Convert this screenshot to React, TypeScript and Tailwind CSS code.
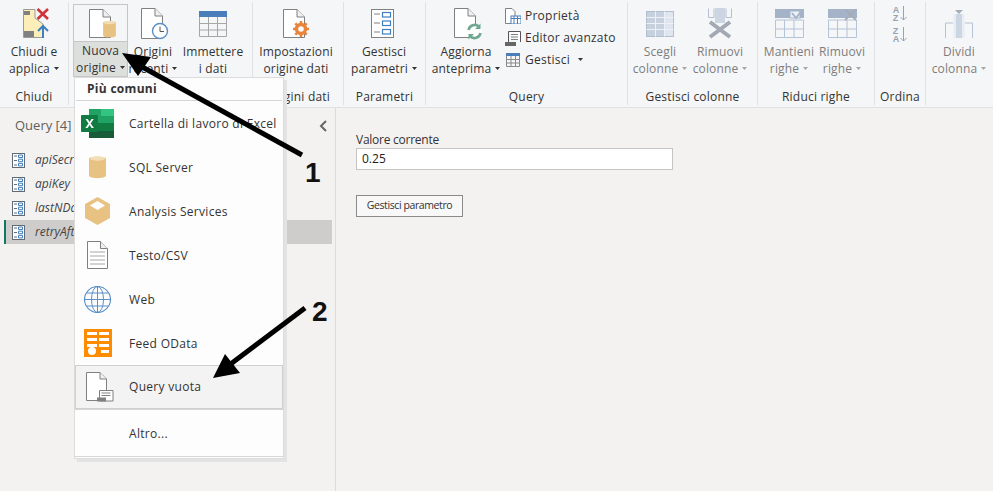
import React from 'react';

const font = "font-['Open_Sans','Noto_Sans',sans-serif]";

function Caret({ muted }: { muted?: boolean }) {
  return (
    <svg width="5" height="3" viewBox="0 0 5 3" className="inline-block ml-[4px] mb-[2px]">
      <path d="M0 0h5L2.5 3z" fill={muted ? '#a6a6a6' : '#333'} />
    </svg>
  );
}

function Doc({ w = 22, h = 29, stroke = '#808080' }: { w?: number; h?: number; stroke?: string }) {
  return (
    <svg width={w} height={h} viewBox="0 0 22 29" className="block">
      <path d="M0.5 0.5H14L21.5 8V28.5H0.5Z" fill="#fff" stroke={stroke} />
      <path d="M14 0.5V8H21.5" fill="#f0f0f0" stroke={stroke} />
    </svg>
  );
}

function ChiudiIcon() {
  return (
    <svg width="26" height="31" viewBox="0 0 26 31" className="ml-[4px]">
      <path d="M0.5 1.5H12V10L20 16V29.5H0.5Z" fill="#fbeeb8" stroke="#9a9a9a" />
      <rect x="1" y="3" width="6" height="4" fill="#808080" />
      <rect x="1" y="23" width="10" height="6" fill="#808080" />
      <path d="M14.5 1L25 11M25 1L14.5 11" stroke="#d13438" strokeWidth="2.6" />
      <path d="M20 30V18M15 23l5-5 5 5" stroke="#3f7fbf" strokeWidth="2" fill="none" />
    </svg>
  );
}

function Cylinder({ w = 17, h = 24 }: { w?: number; h?: number }) {
  return (
    <svg width={w} height={h} viewBox="0 0 17 24" className="block">
      <path d="M0 3.5C0 1 17 1 17 3.5V20.5C17 24 0 24 0 20.5Z" fill="#e8c283" />
      <ellipse cx="8.5" cy="3.5" rx="7.5" ry="2.2" fill="#f3dfb7" />
    </svg>
  );
}

function NuovaIcon() {
  return (
    <div className="relative w-[27px] h-[29px] ml-[3px]">
      <Doc />
      <div className="absolute left-[14px] top-[11px]">
        <Cylinder w={13} h={18} />
      </div>
    </div>
  );
}

function RecentiIcon() {
  return (
    <svg width="28" height="32" viewBox="0 0 28 32" className="ml-[4px]">
      <path d="M0.5 0.5H14L21.5 8V30.5H0.5Z" fill="#fff" stroke="#808080" />
      <path d="M14 0.5V8H21.5" fill="#f0f0f0" stroke="#808080" />
      <circle cx="19" cy="23" r="7.5" fill="#fff" stroke="#5b8fc7" strokeWidth="1.4" />
      <path d="M19 18.5V23.5H23" fill="none" stroke="#555" />
    </svg>
  );
}

function TableIcon() {
  return (
    <svg width="28" height="26" viewBox="0 0 28 26">
      <rect x="0" y="0" width="28" height="6" fill="#4a7ebb" />
      <path d="M0.5 6V25.5H27.5V6M0.5 12.5H27.5M0.5 19H27.5M9.5 6V25.5M18.5 6V25.5" fill="none" stroke="#a6a6a6" />
    </svg>
  );
}

function GearDocIcon() {
  return (
    <div className="relative w-[27px] h-[29px]">
      <Doc />
      <svg width="16" height="16" viewBox="0 0 16 16" className="absolute left-[10px] top-[12px]">
        <circle cx="8" cy="8" r="4.5" fill="none" stroke="#e8853a" strokeWidth="3.4" />
        <path d="M8 0v3M8 13v3M0 8h3M13 8h3M2.3 2.3l2 2M11.7 11.7l2 2M13.7 2.3l-2 2M4.3 11.7l-2 2" stroke="#e8853a" strokeWidth="2.6" />
      </svg>
    </div>
  );
}

function ParamIcon() {
  return (
    <svg width="23" height="29" viewBox="0 0 23 29" className="mr-[4px]">
      <rect x="0.5" y="0.5" width="22" height="28" fill="#fff" stroke="#808080" />
      <path d="M3 5h6M3 14h6M3 23h6" stroke="#808080" />
      <rect x="11.5" y="3.5" width="8" height="4.5" fill="#fff" stroke="#3f7fbf" strokeWidth="1.2" />
      <rect x="11.5" y="12" width="8" height="4.5" fill="#fff" stroke="#3f7fbf" strokeWidth="1.2" />
      <rect x="11.5" y="20.5" width="8" height="4.5" fill="#fff" stroke="#3f7fbf" strokeWidth="1.2" />
    </svg>
  );
}

function RefreshDocIcon() {
  return (
    <svg width="29" height="32" viewBox="0 0 29 32" className="ml-[4px]">
      <path d="M0.5 0.5H14L21.5 8V29.5H0.5Z" fill="#fff" stroke="#808080" />
      <path d="M14 0.5V8H21.5" fill="#f0f0f0" stroke="#808080" />
      <circle cx="20.5" cy="23.5" r="7.5" fill="#fff" />
      <path d="M14.5 22a6.2 6.2 0 0 1 10.5-3.2M26.5 25a6.2 6.2 0 0 1-10.5 3.2" fill="none" stroke="#6fa891" strokeWidth="2.6" />
      <path d="M26.5 15.5V21H21ZM14.5 31.5V26H20Z" fill="#6fa891" />
    </svg>
  );
}

function ChooseColsIcon() {
  return (
    <svg width="28" height="26" viewBox="0 0 28 26">
      <rect x="0.5" y="0.5" width="27" height="25" fill="#dfe6ef" stroke="#b4bfce" />
      <rect x="1" y="1" width="18" height="24" fill="#c6d0de" />
      <path d="M0.5 6.5H27.5M0.5 12.5H27.5M0.5 18.5H27.5M9.5 0.5V25.5M18.5 0.5V25.5" stroke="#eef2f6" />
    </svg>
  );
}

function RemoveColsIcon() {
  return (
    <svg width="24" height="31" viewBox="0 0 24 31">
      <path d="M0.5 0.5V9.5H6V0.5M18 0.5V9.5H23.5V0.5" fill="none" stroke="#b4bfce" />
      <rect x="7" y="0" width="10" height="15" fill="#ccd6e3" />
      <path d="M2 14L22 29M22 14L2 29" stroke="#a2a9b3" strokeWidth="4" />
    </svg>
  );
}

function RowsIcon({ kind }: { kind: 'keep' | 'remove' }) {
  return (
    <svg width="29" height="29" viewBox="0 0 29 29">
      <rect x="0" y="0" width="29" height="9" fill="#a5b3c9" />
      <path d="M0.5 11V28.5H28.5V11H0.5M0.5 20H28.5M9.5 11V28.5M19 11V28.5" fill="none" stroke="#b4c3d6" />
      {kind === 'keep' ? (
        <>
          <rect x="15" y="2" width="10" height="7" fill="#eef2f6" stroke="#a5b3c9" />
          <path d="M17 4l4 5 7-9" fill="none" stroke="#a5b3c9" strokeWidth="2" />
        </>
      ) : (
        <path d="M17 0L28 11M28 0L17 11" stroke="#a5adb8" strokeWidth="2" />
      )}
    </svg>
  );
}

function SortIcon({ flip }: { flip?: boolean }) {
  return (
    <div className="flex items-center gap-[1px]">
      <div className="flex flex-col text-[9px] leading-[8px] font-bold text-[#98a2ae] font-['Liberation_Sans',sans-serif]">
        <span className="block h-[8px]">{flip ? 'Z' : 'A'}</span>
        <span className="block h-[8px]">{flip ? 'A' : 'Z'}</span>
      </div>
      <svg width="7" height="16" viewBox="0 0 7 16">
        <path d="M3.5 0V14M0.5 11l3 3 3-3" fill="none" stroke="#98a2ae" />
      </svg>
    </div>
  );
}

function SplitIcon() {
  return (
    <svg width="28" height="28" viewBox="0 0 28 28">
      <path d="M0.5 28V13H8M20 13H27.5V28" fill="none" stroke="#b4c3d6" />
      <rect x="8.5" y="4" width="11" height="24" fill="#e7edf4" />
      <rect x="11" y="4" width="6" height="24" fill="#ccd6e3" />
      <path d="M10 0h8l-4 4z" fill="#a5adb8" />
    </svg>
  );
}

type BigButtonProps = {
  icon: React.ReactNode;
  lines: string[];
  caret?: boolean;
  muted?: boolean;
  width: string;
  active?: boolean;
};

function BigButton({ icon, lines, caret, muted, width, active }: BigButtonProps) {
  const color = muted ? 'text-[#7d7d7d]' : 'text-[#333]';
  return (
    <div className={`${width} flex flex-col items-center shrink-0 h-[73px] ${active ? 'border border-[#c6c6c6]' : ''}`}>
      <div className={`w-full flex items-center justify-center ${active ? 'h-[36px]' : 'h-[39px]'}`}>{icon}</div>
      <div className={`w-full flex-1 text-center text-[12px] leading-[17px] tracking-[0.15px] whitespace-nowrap ${color} ${active ? 'bg-[#dcdfdc] border-t border-[#c6c6c6]' : ''}`}>
        {lines.map((l, i) => (
          <div key={l}>
            {l}
            {caret && i === lines.length - 1 && <Caret muted={muted} />}
          </div>
        ))}
      </div>
    </div>
  );
}

function Group({ width, label, children, className = '' }: { width: string; label?: string; children: React.ReactNode; className?: string }) {
  return (
    <div className={`${width} shrink-0 h-[103px] border-r border-[#dfe1e3] flex flex-col`}>
      <div className={`h-[87px] pt-[2px] flex ${className}`}>{children}</div>
      <div className="text-center text-[12px] leading-[16px] tracking-[0.2px] text-[#333] whitespace-nowrap">{label}</div>
    </div>
  );
}

function SmallAction({ icon, label, caret }: { icon: React.ReactNode; label: string; caret?: boolean }) {
  return (
    <div className="flex items-center h-[22px] gap-[4px] text-[12px] tracking-[0.25px] text-[#333] whitespace-nowrap">
      <div className="w-[16px] flex justify-center">{icon}</div>
      <span>{label}</span>
      {caret && <Caret />}
    </div>
  );
}

function QueryIcon() {
  return (
    <svg width="13" height="15" viewBox="0 0 13 15" className="shrink-0">
      <rect x="0.5" y="0.5" width="12" height="14" fill="#fff" stroke="#5f6b76" />
      <path d="M2 3h3M2 7.5h3M2 12h3" stroke="#5f6b76" />
      <path d="M6.5 2h4v2.5h-4zM6.5 6.2h4v2.5h-4zM6.5 10.4h4v2.5h-4z" fill="none" stroke="#3f7fbf" />
    </svg>
  );
}

const queries = ['apiSecret', 'apiKey', 'lastNDays', 'retryAfter'];

function ExcelIcon() {
  return (
    <svg width="33" height="29" viewBox="0 0 33 29">
      <rect x="8" y="0" width="25" height="29" rx="1" fill="#21a366" />
      <rect x="20" y="0" width="13" height="7" fill="#33c481" />
      <rect x="8" y="0" width="12" height="7" fill="#21a366" />
      <rect x="20" y="7" width="13" height="7" fill="#21a366" />
      <rect x="8" y="14" width="25" height="8" fill="#107c41" />
      <rect x="8" y="22" width="25" height="7" fill="#185c37" />
      <rect x="0" y="6" width="17" height="17" rx="1" fill="#107c41" />
      <path d="M4.5 10l3 4.5-3.2 4.5h2.3l2-3 2 3h2.3l-3.2-4.5 3-4.5h-2.2l-1.9 2.9-1.8-2.9z" fill="#fff" />
    </svg>
  );
}

function CubeIcon() {
  return (
    <svg width="25" height="28" viewBox="0 0 25 28">
      <path d="M12.5 0L25 7V21L12.5 28L0 21V7Z" fill="#e8c283" />
      <path d="M12.5 4L20 8.5L12.5 13L5 8.5Z" fill="#fff" />
    </svg>
  );
}

function TextDocIcon() {
  return (
    <svg width="21" height="28" viewBox="0 0 21 28">
      <path d="M0.5 0.5H13.5L20.5 7.5V27.5H0.5Z" fill="#fff" stroke="#808080" />
      <path d="M13.5 0.5V7.5H20.5" fill="#f0f0f0" stroke="#808080" />
      <path d="M3 11h15M3 15h15M3 19h15M3 23h15" stroke="#a6a6a6" />
    </svg>
  );
}

function GlobeIcon() {
  return (
    <svg width="27" height="27" viewBox="0 0 27 27" fill="none" stroke="#5b8fc7">
      <circle cx="13.5" cy="13.5" r="13" strokeWidth="1.2" />
      <ellipse cx="13.5" cy="13.5" rx="6" ry="13" />
      <path d="M13.5 0.5V26.5M0.5 13.5H26.5M2.5 7H24.5M2.5 20H24.5" />
    </svg>
  );
}

function ODataIcon() {
  return (
    <svg width="28" height="28" viewBox="0 0 28 28">
      <rect width="28" height="28" fill="#ff8c00" />
      <path d="M3 3h10v3H3zM15 3h10v3H15zM3 9h10v3H3zM15 9h10v3H15zM3 15h10v3H3zM15 15h10v3H15zM17 21h8v3H17z" fill="#fff" />
      <circle cx="8" cy="22" r="4" fill="#fff" />
    </svg>
  );
}

function BlankQueryIcon() {
  return (
    <svg width="28" height="30" viewBox="0 0 28 30">
      <path d="M0.5 0.5H14L20.5 7V28.5H0.5Z" fill="#fff" stroke="#808080" />
      <path d="M14 0.5V7H20.5" fill="#f0f0f0" stroke="#808080" />
      <path d="M13.5 18.5H27V29H13.5Z" fill="#fff" stroke="#808080" />
      <path d="M15.5 21h9M15.5 23.5h9" stroke="#808080" />
      <rect x="11" y="25.5" width="9" height="4" fill="#808080" />
    </svg>
  );
}

const menuItems: { label: string; icon: React.ReactNode; hover?: boolean }[] = [
  { label: 'Cartella di lavoro di Excel', icon: <ExcelIcon /> },
  { label: 'SQL Server', icon: <Cylinder /> },
  { label: 'Analysis Services', icon: <CubeIcon /> },
  { label: 'Testo/CSV', icon: <TextDocIcon /> },
  { label: 'Web', icon: <GlobeIcon /> },
  { label: 'Feed OData', icon: <ODataIcon /> },
  { label: 'Query vuota', icon: <BlankQueryIcon />, hover: true },
];

function SourceMenu() {
  return (
    <div className="absolute left-[74px] top-[77px] w-[210px] h-[382px] bg-[#fdfdfd] border border-[#dcdcdc] shadow-[3px_3px_0_#e3e3e3] flex flex-col text-[12px] tracking-[0.3px] text-[#333]">
      <div className="h-[23px] mx-[1px] border-b border-[#d6d6d6] pl-[11px] font-bold leading-[22px]">Più comuni</div>
      {menuItems.map((item) => (
        <div
          key={item.label}
          className={`h-[44px] flex items-center ${item.hover ? 'bg-[#f3f3f3] border border-[#cfcfcf] shadow-[0_1px_0_#d6d6d6]' : ''}`}
        >
          <div className={`shrink-0 flex justify-center ${item.hover ? 'w-[47px] mr-[6px]' : 'w-[45px] mr-[9px]'}`}>{item.icon}</div>
          <span className={`whitespace-nowrap ${item.hover ? '' : 'pt-[2px]'}`}>{item.label}</span>
        </div>
      ))}
      <div className="flex-1 pl-[54px] pt-[2px] flex items-center">Altro...</div>
      <div className="h-[2px] border-t border-[#d6d6d6]" />
    </div>
  );
}

function Arrows() {
  return (
    <>
      <svg width="993" height="491" viewBox="0 0 993 491" className="absolute inset-0 pointer-events-none">
        <path d="M302 155L135 63" stroke="#000" strokeWidth="5" />
        <path d="M122 53L151 57L138 76Z" fill="#000" />
        <path d="M305 308L228 366" stroke="#000" strokeWidth="5" />
        <path d="M213 378L225 354L240 373Z" fill="#000" />
      </svg>
      <div className="absolute left-[305px] top-[157px] text-[28px] leading-[32px] font-bold text-[#111] font-['Liberation_Sans',sans-serif]">1</div>
      <div className="absolute left-[312px] top-[296px] text-[28px] leading-[32px] font-bold text-[#111] font-['Liberation_Sans',sans-serif]">2</div>
    </>
  );
}

export default function App() {
  return (
    <div className={`relative w-[993px] h-[491px] overflow-hidden bg-[#f3f2f1] flex flex-col ${font}`}>
      {/* Ribbon */}
      <div className="h-[108px] shrink-0 bg-[#f5f6f7] border-b border-[#e1e1e1] pt-[2px] flex">
        <Group width="w-[69px]" label="Chiudi">
          <BigButton width="w-[68px]" icon={<ChiudiIcon />} lines={['Chiudi e', 'applica']} caret />
        </Group>
        <Group width="w-[184px]" className="pl-[4px]">
          <BigButton width="w-[55px]" active icon={<NuovaIcon />} lines={['Nuova', 'origine']} caret />
          <BigButton width="w-[50px]" icon={<RecentiIcon />} lines={['Origini', 'recenti']} caret />
          <BigButton width="w-[70px]" icon={<TableIcon />} lines={['Immettere', 'i dati']} />
        </Group>
        <Group width="w-[91px]" label="Origini dati">
          <BigButton width="w-[86px]" icon={<GearDocIcon />} lines={['Impostazioni', 'origine dati']} />
        </Group>
        <Group width="w-[82px]" label="Parametri">
          <BigButton width="w-[80px]" icon={<ParamIcon />} lines={['Gestisci', 'parametri']} caret />
        </Group>
        <Group width="w-[202px]" label="Query" className="pl-[4px]">
          <BigButton width="w-[72px]" icon={<RefreshDocIcon />} lines={['Aggiorna', 'anteprima']} caret />
          <div className="pt-[1px] pl-[3px] flex flex-col">
            <SmallAction
              label="Proprietà"
              icon={
                <svg width="16" height="16" viewBox="0 0 16 16">
                  <path d="M0.5 0.5H7L10 3.5V15.5H0.5Z" fill="#fff" stroke="#808080" />
                  <rect x="6" y="8" width="10" height="8" fill="#fff" stroke="#4a7ebb" />
                  <path d="M6 10.5h10M9 8v8M12.5 8v8" stroke="#4a7ebb" />
                </svg>
              }
            />
            <SmallAction
              label="Editor avanzato"
              icon={
                <svg width="16" height="15" viewBox="0 0 16 15">
                  <path d="M3.5 0.5H15.5V11M3.5 0.5V12" fill="#fff" stroke="#555" />
                  <path d="M6 3.5h7M6 6h7M6 8.5h7" stroke="#808080" />
                  <rect x="0" y="11" width="11" height="4" fill="#666" />
                </svg>
              }
            />
            <SmallAction
              label="Gestisci"
              caret
              icon={
                <svg width="14" height="14" viewBox="0 0 14 14">
                  <rect width="14" height="3" fill="#4a7ebb" />
                  <path d="M0.5 3V13.5H13.5V3M0.5 6.5H13.5M0.5 10H13.5M5 3V13.5M9.5 3V13.5" fill="none" stroke="#8a8a8a" />
                </svg>
              }
            />
          </div>
        </Group>
        <Group width="w-[130px]" label="Gestisci colonne" className="pl-[2px]">
          <BigButton width="w-[60px]" muted icon={<ChooseColsIcon />} lines={['Scegli', 'colonne']} caret />
          <BigButton width="w-[60px]" muted icon={<RemoveColsIcon />} lines={['Rimuovi', 'colonne']} caret />
        </Group>
        <Group width="w-[117px]" label="Riduci righe" className="pl-[2px]">
          <BigButton width="w-[58px]" muted icon={<RowsIcon kind="keep" />} lines={['Mantieni', 'righe']} caret />
          <BigButton width="w-[48px]" muted icon={<RowsIcon kind="remove" />} lines={['Rimuovi', 'righe']} caret />
        </Group>
        <Group width="w-[51px]" label="Ordina">
          <div className="w-full h-[42px] flex flex-col items-center pt-[2px] gap-[5px]">
            <SortIcon />
            <SortIcon flip />
          </div>
        </Group>
        <div className="flex-1 h-[89px] pt-[2px] flex">
          <BigButton width="w-[66px]" muted icon={<SplitIcon />} lines={['Dividi', 'colonna']} caret />
        </div>
      </div>

      {/* Body */}
      <div className="flex-1 flex min-h-0">
        <div className="w-[336px] shrink-0 border-r border-[#dcdcdc] flex flex-col">
          <div className="h-[40px] shrink-0 pl-[15px] pr-[8px] pb-[4px] flex items-center justify-between text-[13px] text-[#605e5c]">
            <span>Query [4]</span>
            <svg width="8" height="12" viewBox="0 0 8 12">
              <path d="M7 1L2 6l5 5" fill="none" stroke="#666" strokeWidth="2" />
            </svg>
          </div>
          {queries.map((q) => (
            <div
              key={q}
              className={`h-[24px] ml-[4px] mr-[3px] flex items-center gap-[10px] text-[12px] italic text-[#444] ${
                q === 'retryAfter' ? 'bg-[#cfcdcb] border-l-2 border-[#117865] pl-[6px]' : 'pl-[8px]'
              }`}
            >
              <QueryIcon />
              <span>{q}</span>
            </div>
          ))}
        </div>
        <div className="flex-1 pl-[20px] pt-[23px] text-[12px] text-[#333]">
          <div className="leading-[17px] tracking-[-0.25px]">Valore corrente</div>
          <div className="w-[317px] h-[22px] bg-white border border-[#c4c4c4] pl-[5px] leading-[20px] text-[#222]">0.25</div>
          <div className="w-[107px] h-[22px] mt-[25px] bg-[#f8f8f8] border border-[#8a8a8a] flex items-center justify-center text-[10.5px] tracking-[-0.4px]">
            Gestisci parametro
          </div>
        </div>
      </div>

      <SourceMenu />
      <Arrows />
    </div>
  );
}
